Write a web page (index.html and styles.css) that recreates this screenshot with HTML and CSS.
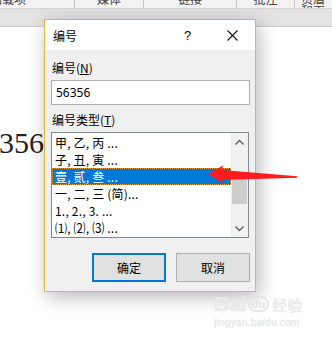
FILE: index.html
```
<!DOCTYPE html>
<html lang="zh-CN">
<head>
  <meta charset="UTF-8">
  <meta name="viewport" content="width=device-width, initial-scale=1.0">
  <title>编号</title>
  <link rel="stylesheet" href="styles.css">
</head>
<body>
  <div class="ribbon">
    <div class="group g1">加载项</div>
    <div class="group g2">媒体</div>
    <div class="group g3">链接</div>
    <div class="group g4">批注</div>
    <div class="group g5">页眉和页脚</div>
  </div>
  <div class="band"></div>
  <div class="doc">
    <p class="line">356<span class="mark">↵</span></p>
  </div>

  <div class="dialog">
    <div class="titlebar">
      <span class="title">编号</span>
      <span class="help">?</span>
      <svg class="close" width="11" height="11" viewBox="0 0 11 11">
        <path d="M0.5 0.5 L10.5 10.5 M10.5 0.5 L0.5 10.5" stroke="#111" stroke-width="1.1" fill="none"/>
      </svg>
    </div>
    <div class="body">
      <div class="label">编号(<u>N</u>)</div>
      <div class="input">56356</div>
      <div class="label">编号类型(<u>T</u>)</div>
      <div class="listbox">
        <ul class="items">
          <li>甲, 乙, 丙 ...</li>
          <li>子, 丑, 寅 ...</li>
          <li class="selected">壹, 贰, 叁 ...</li>
          <li>一, 二, 三 (简)...</li>
          <li>1., 2., 3. ...</li>
          <li>⑴, ⑵, ⑶ ...</li>
        </ul>
        <div class="scrollbar">
          <div class="sb-btn">
            <svg width="9" height="6" viewBox="0 0 9 6"><path d="M0.5 5.5 L4.5 1.5 L8.5 5.5" stroke="#606060" stroke-width="1.4" fill="none"/></svg>
          </div>
          <div class="sb-track">
            <div class="sb-thumb"></div>
          </div>
          <div class="sb-btn">
            <svg width="9" height="6" viewBox="0 0 9 6"><path d="M0.5 0.5 L4.5 4.5 L8.5 0.5" stroke="#606060" stroke-width="1.4" fill="none"/></svg>
          </div>
        </div>
      </div>
      <div class="buttons">
        <button class="btn primary">确定</button>
        <button class="btn">取消</button>
      </div>
    </div>
  </div>

  <svg class="arrow" width="332" height="339" viewBox="0 0 332 339">
    <polygon points="208,174 223,165.5 222,170 297,176.3 297,177.8 222,180 223,183.5" fill="#ff1c1c"/>
  </svg>

  <div class="watermark">
    <div class="wm-logo"><span class="wm-bai">Bai</span><span class="wm-du">du</span><span class="wm-jy">经验</span></div>
    <div class="wm-url">jingyan.baidu.com</div>
  </div>
</body>
</html>
```

FILE: styles.css
```
* {
  padding: 0;
  margin: 0;
  box-sizing: border-box;
}
body {
  width: 332px;
  height: 339px;
  overflow: hidden;
  background: #fff;
  font-family: "Noto Sans CJK SC", "Noto Sans", sans-serif;
  font-size: 12px;
  color: #000;
  position: relative;
}
.ribbon {
  display: flex;
  height: 9px;
  background: #f3f3f3;
  border-bottom: 1px solid #d5d5d5;
  overflow: hidden;
}
.group {
  border-right: 1px solid #c6c6c6;
  text-align: center;
  font-size: 12px;
  line-height: 12px;
  margin-top: -7px;
  height: 15px;
  color: #444;
}
.g1 { width: 75px; text-align: left; padding-left: 0; text-indent: -10px; }
.g2 { width: 69px; }
.g3 { width: 93px; }
.g4 { width: 58px; }
.g5 { flex: 1; border-right: none; text-align: left; padding-left: 6px; }
.band {
  height: 18px;
  background: #e3e3e3;
  border-bottom: 1px solid #cdcdcd;
}
.doc {
  padding-top: 99px;
}
.line {
  font-family: "Liberation Serif", serif;
  font-size: 30px;
  line-height: 34px;
  color: #222;
  margin-left: -1px;
}
.mark {
  font-family: "DejaVu Sans", sans-serif;
  font-size: 8px;
  color: #888;
  vertical-align: -1px;
}

.dialog {
  position: absolute;
  left: 44px;
  top: 19px;
  width: 212px;
  height: 273px;
  border: 1px solid #dfb83e;
  background: #f0f0f0;
  box-shadow: 3px 5px 18px rgba(0, 0, 0, 0.28);
  display: flex;
  flex-direction: column;
}
.titlebar {
  height: 30px;
  background: #fff;
  display: flex;
  align-items: center;
  padding-left: 8px;
}
.title {
  flex: 1;
  font-size: 12px;
  padding-top: 1px;
}
.help {
  font-family: "Liberation Sans", sans-serif;
  font-size: 13px;
  width: 20px;
  margin-right: 23px;
  padding-top: 1px;
}
.close {
  margin-right: 17px;
}
.body {
  flex: 1;
  padding: 10px 5px 0 6px;
  display: flex;
  flex-direction: column;
}
.label {
  line-height: 16px;
  margin-bottom: 4px;
  padding-left: 1px;
}
.label u {
  text-underline-offset: 1px;
}
.input {
  height: 25px;
  border: 1px solid #adadad;
  background: #fff;
  padding-left: 4px;
  line-height: 23px;
  font-family: "Noto Sans", sans-serif;
  font-size: 12px;
  margin-bottom: 7px;
}
.body .label:nth-of-type(2) {
  margin-bottom: 3px;
}
.listbox {
  height: 106px;
  border: 1px solid #828790;
  background: #fff;
  display: flex;
  margin-right: 1px;
}
.items {
  list-style: none;
  flex: 1;
  padding-top: 1px;
}
.items li {
  height: 17px;
  line-height: 17px;
  padding-left: 3px;
  white-space: nowrap;
  letter-spacing: 0.2px;
}
.items li.selected {
  background: #0078d7;
  color: #fff;
  outline: 1px dotted #e7a04a;
  outline-offset: -1px;
}
.scrollbar {
  width: 17px;
  background: #f0f0f0;
  display: flex;
  flex-direction: column;
}
.sb-btn {
  height: 17px;
  display: flex;
  align-items: center;
  justify-content: center;
}
.sb-track {
  flex: 1;
  padding-top: 29px;
}
.sb-thumb {
  height: 25px;
  margin: 0 1px;
  background: #cdcdcd;
}
.buttons {
  display: flex;
  justify-content: flex-end;
  gap: 10px;
  margin-top: 15px;
}
.btn {
  width: 74px;
  height: 29px;
  background: #e1e1e1;
  border: 1px solid #adadad;
  font-family: "Noto Sans CJK SC", sans-serif;
  font-size: 12px;
  color: #000;
}
.btn.primary {
  border: 2px solid #0078d7;
}

.arrow {
  position: absolute;
  left: 0;
  top: 0;
}
.watermark {
  position: absolute;
  left: 214px;
  top: 293px;
  color: #ebebeb;
  font-family: "Liberation Sans", sans-serif;
}
.wm-logo {
  display: flex;
  align-items: center;
  height: 22px;
}
.wm-bai {
  font-size: 21px;
  font-weight: bold;
  text-shadow: 0 0 1px #d8d8d8;
}
.wm-du {
  font-size: 11px;
  font-weight: bold;
  border: 2px solid #e6e6e6;
  border-radius: 10px;
  padding: 0 2px;
  margin-left: 1px;
  color: #e3e3e3;
}
.wm-jy {
  font-family: "Noto Sans CJK SC", sans-serif;
  font-size: 15px;
  margin-left: 3px;
  text-shadow: 0 0 1px #d8d8d8;
}
.wm-url {
  font-size: 10px;
  margin-top: 2px;
  letter-spacing: 0.3px;
  text-shadow: 0 0 1px #dcdcdc;
}
```
